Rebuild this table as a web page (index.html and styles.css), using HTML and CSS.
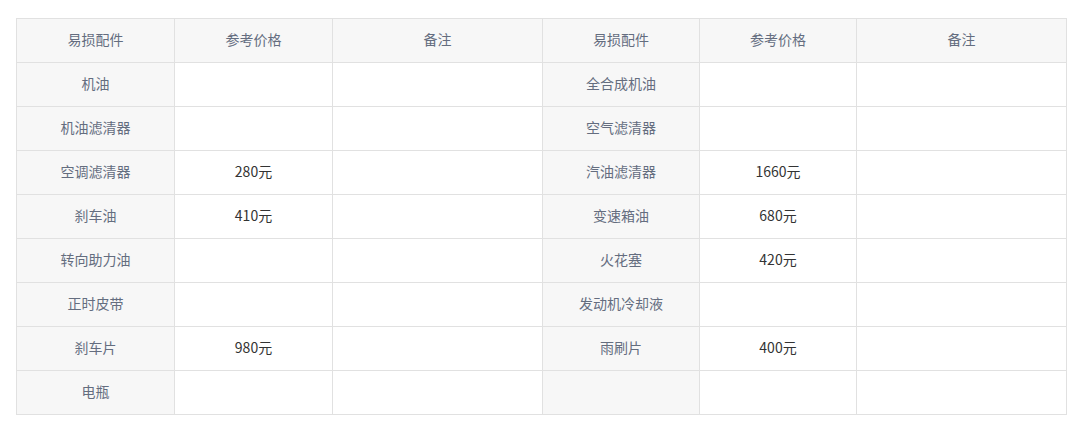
FILE: index.html
```html
<!DOCTYPE html>
<html lang="zh-CN">
<head>
<meta charset="utf-8">
<link rel="stylesheet" href="styles.css">
</head>
<body>
<div class="wrap">
<table class="parts">
<colgroup>
<col class="c-name"><col class="c-price"><col class="c-note">
<col class="c-name2"><col class="c-price2"><col class="c-note2">
</colgroup>
<thead>
<tr><th>易损配件</th><th>参考价格</th><th>备注</th><th>易损配件</th><th>参考价格</th><th>备注</th></tr>
</thead>
<tbody>
<tr><td class="name">机油</td><td></td><td></td><td class="name">全合成机油</td><td></td><td></td></tr>
<tr><td class="name">机油滤清器</td><td></td><td></td><td class="name">空气滤清器</td><td></td><td></td></tr>
<tr><td class="name">空调滤清器</td><td>280元</td><td></td><td class="name">汽油滤清器</td><td>1660元</td><td></td></tr>
<tr><td class="name">刹车油</td><td>410元</td><td></td><td class="name">变速箱油</td><td>680元</td><td></td></tr>
<tr><td class="name">转向助力油</td><td></td><td></td><td class="name">火花塞</td><td>420元</td><td></td></tr>
<tr><td class="name">正时皮带</td><td></td><td></td><td class="name">发动机冷却液</td><td></td><td></td></tr>
<tr><td class="name">刹车片</td><td>980元</td><td></td><td class="name">雨刷片</td><td>400元</td><td></td></tr>
<tr><td class="name">电瓶</td><td></td><td></td><td class="name"></td><td></td><td></td></tr>
</tbody>
</table>
</div>
</body>
</html>
```

FILE: styles.css
```css
html, body {
  margin: 0;
  padding: 0;
  background: #ffffff;
}
.wrap {
  padding: 18px 16px;
}
.parts {
  border-collapse: collapse;
  table-layout: fixed;
  width: 1050px;
  font-family: "Noto Sans CJK SC", "Noto Sans", sans-serif;
  font-size: 14px;
  color: #333333;
}
.c-name { width: 158px; }
.c-price { width: 158px; }
.c-note { width: 210px; }
.c-name2 { width: 157px; }
.c-price2 { width: 157px; }
.c-note2 { width: 210px; }
.parts th,
.parts td {
  border: 1px solid #e1e1e1;
  height: 44px;
  box-sizing: border-box;
  padding: 0 0 4px 0;
  text-align: center;
  vertical-align: middle;
  line-height: 20px;
}
.parts th {
  background: #f7f7f7;
  font-weight: normal;
  color: #646d7f;
}
.parts td.name {
  background: #f7f7f7;
  color: #646d7f;
}
```
